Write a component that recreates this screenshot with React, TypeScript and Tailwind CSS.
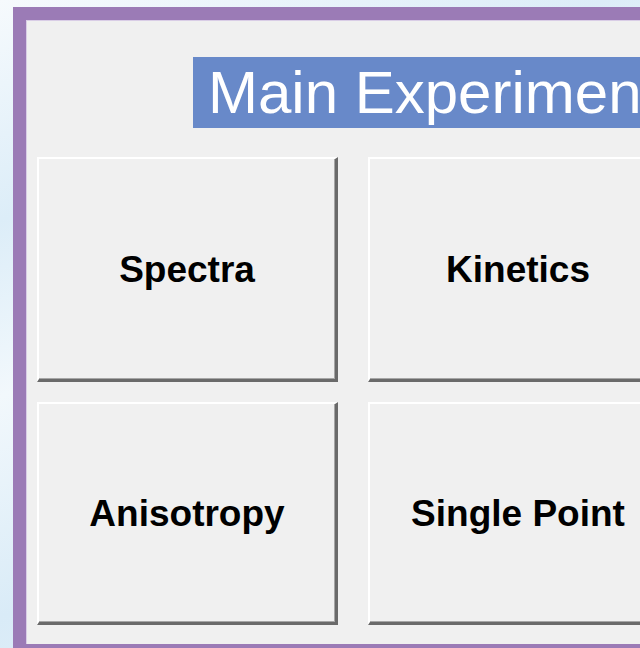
import React from "react";

type BtnProps = { label: string; tall?: boolean };

function ClassicButton({ label, tall }: BtnProps) {
  return (
    <button
      className={`${tall ? "h-[225px]" : "h-[223px]"} w-[301px] bg-[#f0f0f0] border-t-2 border-l-2 border-t-white border-l-white border-b-[3px] border-r-[3px] border-b-[#6a6a6a] border-r-[#6a6a6a] shadow-[inset_-1px_-1px_0_#a6a6a6] flex items-center justify-center text-black font-bold text-[37px] leading-none font-['Liberation_Sans',Arial,sans-serif]`}
    >
      {label}
    </button>
  );
}

export default function App() {
  return (
    <div className="w-[640px] h-[648px] overflow-hidden bg-[linear-gradient(160deg,#f6fafd_0%,#dcedf8_25%,#f2f8fc_45%,#d9ebf7_70%,#e6f2fa_100%)]">
      <div className="ml-[13px] mt-[7px] w-[720px] h-[650px] border-[13px] border-r-0 border-[#9b7bb6] bg-[#f0f0f0]">
        <div className="w-full h-full pl-[11px] pt-[37px] shadow-[inset_1px_1px_0_#d9cde6]">
          <div className="ml-[156px] h-[71px] bg-[#6889c9] pl-[15px] flex items-center text-white text-[60px] leading-none whitespace-nowrap font-['Liberation_Sans',Arial,sans-serif]">
            Main Experiments
          </div>
          <div className="mt-[29px] grid grid-cols-[301px_301px] gap-x-[30px] gap-y-[20px]">
            <ClassicButton label="Spectra" tall />
            <ClassicButton label="Kinetics" tall />
            <ClassicButton label="Anisotropy" />
            <ClassicButton label="Single Point" />
          </div>
        </div>
      </div>
    </div>
  );
}
